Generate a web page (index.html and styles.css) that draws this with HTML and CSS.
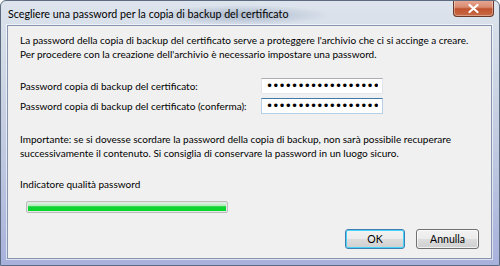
FILE: index.html
```html
<!DOCTYPE html>
<html lang="it">
<head>
    <meta charset="UTF-8">
    <title>Scegliere una password per la copia di backup del certificato</title>
    <link rel="stylesheet" href="styles.css">
</head>
<body>
    <div class="window">
        <div class="titlebar">
            <span class="title">Scegliere una password per la copia di backup del certificato</span>
            <button class="close-btn" aria-label="Chiudi">
                <svg width="13" height="11" viewBox="0 0 13 11">
                    <path d="M2.5 2 L10.5 9 M10.5 2 L2.5 9" stroke="#fff" stroke-width="2.2" stroke-linecap="round"/>
                </svg>
            </button>
        </div>

        <div class="client">
            <p class="intro">La password della copia di backup del certificato serve a proteggere l'archivio che ci si accinge a creare.<br>Per procedere con la creazione dell'archivio è necessario impostare una password.</p>

            <div class="fields">
                <label class="field-label" for="pwd1">Password copia di backup del certificato:</label>
                <input id="pwd1" class="pwd" type="password" value="abcdefghijklmnopqrs">
                <label class="field-label" for="pwd2">Password copia di backup del certificato (conferma):</label>
                <input id="pwd2" class="pwd focused" type="password" value="abcdefghijklmnopqrs">
            </div>

            <p class="note">Importante: se si dovesse scordare la password della copia di backup, non sarà possibile recuperare<br>successivamente il contenuto. Si consiglia di conservare la password in un luogo sicuro.</p>

            <div class="quality">
                <span class="quality-label">Indicatore qualità password</span>
                <div class="meter"><div class="meter-fill" style="width: 100%"></div></div>
            </div>

            <div class="actions">
                <button class="btn default">OK</button>
                <button class="btn">Annulla</button>
            </div>
        </div>
    </div>
</body>
</html>
```

FILE: styles.css
```css
* {
    box-sizing: border-box;
    margin: 0;
    padding: 0;
}

body {
    font-family: Lato, 'Liberation Sans', sans-serif;
    font-size: 10px;
    color: #000;
    background: #fff;
}

.window {
    width: 500px;
    height: 266px;
    display: flex;
    flex-direction: column;
    overflow: hidden;
    border-radius: 6px 6px 0 0;
    border: 1px solid #5d6b80;
    background:
        radial-gradient(ellipse 90px 10px at 240px 14px, rgba(110, 130, 160, 0.45), transparent),
        linear-gradient(180deg, #dde4ed 0%, #cdd6e4 30%, #b9c3df 70%, #a7b1dc 100%);
}

.titlebar {
    height: 24px;
    flex-shrink: 0;
    display: flex;
    align-items: flex-start;
    justify-content: space-between;
    padding-left: 7px;
}

.title {
    font-size: 10.7px;
    line-height: 25px;
    color: #000;
    white-space: nowrap;
}

.close-btn {
    width: 41px;
    height: 17px;
    margin-right: 5px;
    margin-top: -1px;
    border: 1px solid #6a3a2c;
    border-top: none;
    border-radius: 0 0 4px 4px;
    background: linear-gradient(180deg, #e7a995 0%, #d98a70 45%, #c0532f 55%, #c96a45 100%);
    display: flex;
    align-items: center;
    justify-content: center;
    box-shadow: inset 0 0 0 1px rgba(255, 255, 255, 0.35);
}

.client {
    flex: 1;
    min-height: 0;
    margin: 0 7px 6px 6px;
    border: 1px solid #8794b0;
    background: #f0f0f0;
    padding: 7px 12px 9px 12px;
    display: flex;
    flex-direction: column;
    box-shadow: 0 0 0 1px rgba(255, 255, 255, 0.6);
}

.intro,
.note {
    line-height: 14px;
    white-space: nowrap;
}

.fields {
    display: grid;
    grid-template-columns: 241px 122px;
    row-gap: 4px;
    align-items: center;
    margin-top: 17px;
}

.field-label {
    line-height: 14px;
    white-space: nowrap;
}

.pwd {
    width: 122px;
    height: 16px;
    background: #fff;
    border: 1px solid #e2e3ea;
    border-top-color: #abadb3;
    border-bottom-color: #e3e9ef;
    font-family: 'DejaVu Sans', sans-serif;
    font-size: 12px;
    letter-spacing: -0.8px;
    padding: 0 4px;
    color: #000;
    outline: none;
}

.pwd.focused {
    border-color: #b5cfe7;
    border-top-color: #3d7bad;
}

.note {
    margin-top: 18px;
}

.quality {
    margin-top: 17px;
    display: flex;
    flex-direction: column;
}

.quality-label {
    line-height: 14px;
}

.meter {
    margin: 10px 0 0 6px;
    width: 202px;
    height: 12px;
    border: 1px solid #bcbcbc;
    border-radius: 2px;
    background: #e6e6e6;
    padding: 1px;
}

.meter-fill {
    height: 100%;
    background: linear-gradient(180deg, #d8f5dc 0%, #a6e9b0 40%, #10d234 45%, #06d82b 100%);
}

.actions {
    margin-top: auto;
    display: flex;
    justify-content: flex-end;
    gap: 11px;
}

.btn {
    width: 63px;
    height: 20px;
    font-family: inherit;
    font-size: 10.5px;
    color: #000;
    border: 1px solid #707070;
    border-radius: 3px;
    background: linear-gradient(180deg, #f2f2f2 0%, #ebebeb 50%, #dddddd 50%, #cfcfcf 100%);
    box-shadow: inset 0 0 0 1px rgba(255, 255, 255, 0.7);
}

.btn.default {
    width: 60px;
    border-color: #3c7fb1;
    box-shadow: inset 0 0 0 1px #48d4f8;
}
```
